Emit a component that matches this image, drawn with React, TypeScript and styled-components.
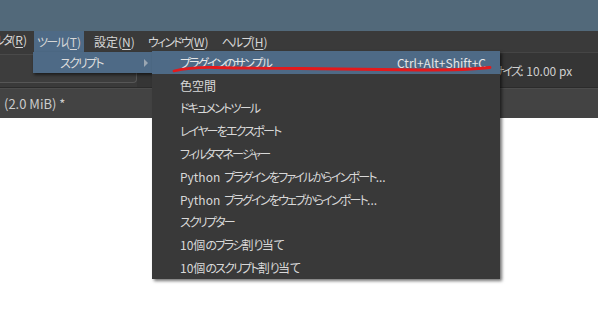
import React from "react";
import styled, { createGlobalStyle } from "styled-components";

const GlobalStyle = createGlobalStyle`
  html, body {
    margin: 0;
    padding: 0;
    background: #ffffff;
  }
  body {
    font-family: "Noto Sans CJK JP", "Noto Sans", sans-serif;
    font-size: 12px;
    font-feature-settings: "palt";
  }
`;

const Window = styled.div`
  position: relative;
  width: 598px;
  height: 320px;
  overflow: hidden;
  display: flex;
  flex-direction: column;
  background: #ffffff;
`;

const TitleBand = styled.div`
  height: 31px;
  background: #52697a;
`;

const MenuBar = styled.div`
  height: 21px;
  background: #3a3a3a;
  display: flex;
  align-items: stretch;
  gap: 7px;
  color: #d6d6d6;
`;

const ClippedItem = styled.div`
  width: 27px;
  overflow: hidden;
  display: flex;
  justify-content: flex-end;
  white-space: nowrap;
`;

const MenuItem = styled.div<{ $open?: boolean }>`
  display: flex;
  align-items: center;
  padding: 0 3px;
  white-space: nowrap;
  background: ${(p) => (p.$open ? "#4e6a86" : "transparent")};
  line-height: 21px;
`;

const Key = styled.span`
  text-decoration: underline;
  text-underline-offset: 2px;
`;

// katakana in the original UI font is much narrower than in Noto
const Kana = styled.span`
  letter-spacing: -1.8px;
`;

const Gap = styled.span`
  display: inline-block;
  width: 4px;
`;

const ToolRow = styled.div`
  height: 36px;
  display: flex;
  align-items: stretch;
  background: #3a3a3a;
  border-bottom: 1px solid #2b2b2b;
  box-sizing: border-box;
`;

const ToolBox = styled.div`
  width: 137px;
  margin-top: 2px;
  height: 29px;
  border: 1px solid #565656;
  border-left: none;
  border-top-color: #4a4a4a;
  border-radius: 0 0 4px 0;
  box-sizing: border-box;
  background: #3d3d3d;
`;

const ToolRight = styled.div`
  flex: 1;
  display: flex;
  align-items: center;
  padding-left: 356px;
  background: #353535;
  border-top: 1px solid #454545;
  color: #cfcfcf;
  white-space: nowrap;
`;

const TabRow = styled.div`
  height: 30px;
  display: flex;
  align-items: center;
  padding-left: 4px;
  background: #434343;
  border-top: 1px solid #4c4c4c;
  box-sizing: border-box;
  color: #cccccc;
  font-size: 13px;
`;

const Canvas = styled.div`
  flex: 1;
  background: #ffffff;
`;

const ToolsMenu = styled.div`
  position: absolute;
  left: 33px;
  top: 52px;
  width: 119px;
  height: 21px;
  background: #4e6a86;
  box-shadow: 1px 2px 3px rgba(0, 0, 0, 0.55);
  display: flex;
  align-items: center;
  color: #dcdcdc;
  padding-left: 27px;
  box-sizing: border-box;
`;

const Arrow = styled.span`
  margin-left: auto;
  margin-right: 4px;
  width: 0;
  height: 0;
  border-top: 4px solid transparent;
  border-bottom: 4px solid transparent;
  border-left: 4px solid #9aa6b2;
`;

const SubMenu = styled.div`
  position: absolute;
  left: 152px;
  top: 51px;
  width: 348px;
  background: #393939;
  box-shadow: 2px 2px 3px rgba(0, 0, 0, 0.55);
  display: flex;
  flex-direction: column;
`;

const SubItem = styled.div<{ $active?: boolean }>`
  height: 22.8px;
  display: flex;
  align-items: center;
  padding: 0 14px 0 28px;
  color: ${(p) => (p.$active ? "#e6e6e6" : "#d8d8d8")};
  background: ${(p) => (p.$active ? "#4e6a86" : "transparent")};
  white-space: nowrap;
`;

const Shortcut = styled.span`
  margin-left: auto;
`;

const Mark = styled.svg`
  position: absolute;
  left: 0;
  top: 0;
  pointer-events: none;
`;

function JP({ text }: { text: string }) {
  const parts = text.split(/([\u3040-\u30ff]+| )/);
  return (
    <>
      {parts.map((p, i) => {
        if (p === " ") return <Gap key={i} />;
        if (/[\u3040-\u30ff]/.test(p)) return <Kana key={i}>{p}</Kana>;
        return <React.Fragment key={i}>{p}</React.Fragment>;
      })}
    </>
  );
}

const menus = [
  { label: "ツール", key: "T", open: true },
  { label: "設定", key: "N" },
  { label: "ウィンドウ", key: "W" },
  { label: "ヘルプ", key: "H" },
];

const scripts = [
  "色空間",
  "ドキュメントツール",
  "レイヤーをエクスポート",
  "フィルタマネージャー",
  "Python プラグインをファイルからインポート...",
  "Python プラグインをウェブからインポート...",
  "スクリプター",
  "10個のブラシ割り当て",
  "10個のスクリプト割り当て",
];

export default function App() {
  return (
    <>
      <GlobalStyle />
      <Window>
        <TitleBand />
        <MenuBar>
          <ClippedItem>
            <span>
              <JP text="フィルタ" />(<Key>R</Key>)
            </span>
          </ClippedItem>
          {menus.map((m) => (
            <MenuItem key={m.key} $open={m.open}>
              <JP text={m.label} />(<Key>{m.key}</Key>)
            </MenuItem>
          ))}
        </MenuBar>
        <ToolRow>
          <ToolBox />
          <ToolRight>
            <JP text="サイズ" />: 10.00 px
          </ToolRight>
        </ToolRow>
        <TabRow>(2.0 MiB) *</TabRow>
        <Canvas />

        <ToolsMenu>
          <JP text="スクリプト" />
          <Arrow />
        </ToolsMenu>

        <SubMenu>
          <SubItem $active>
            <JP text="プラグインのサンプル" />
            <Shortcut>Ctrl+Alt+Shift+C</Shortcut>
          </SubItem>
          {scripts.map((s) => (
            <SubItem key={s}>
              <JP text={s} />
            </SubItem>
          ))}
        </SubMenu>

        <Mark width="598" height="320" viewBox="0 0 598 320">
          <path
            d="M174 71 Q 190 67 215 67.5 Q 260 68.5 300 68.5 Q 360 69 420 70 Q 470 70 490 67.5"
            fill="none"
            stroke="#e3191c"
            strokeWidth="2.8"
            strokeLinecap="round"
          />
        </Mark>
      </Window>
    </>
  );
}
